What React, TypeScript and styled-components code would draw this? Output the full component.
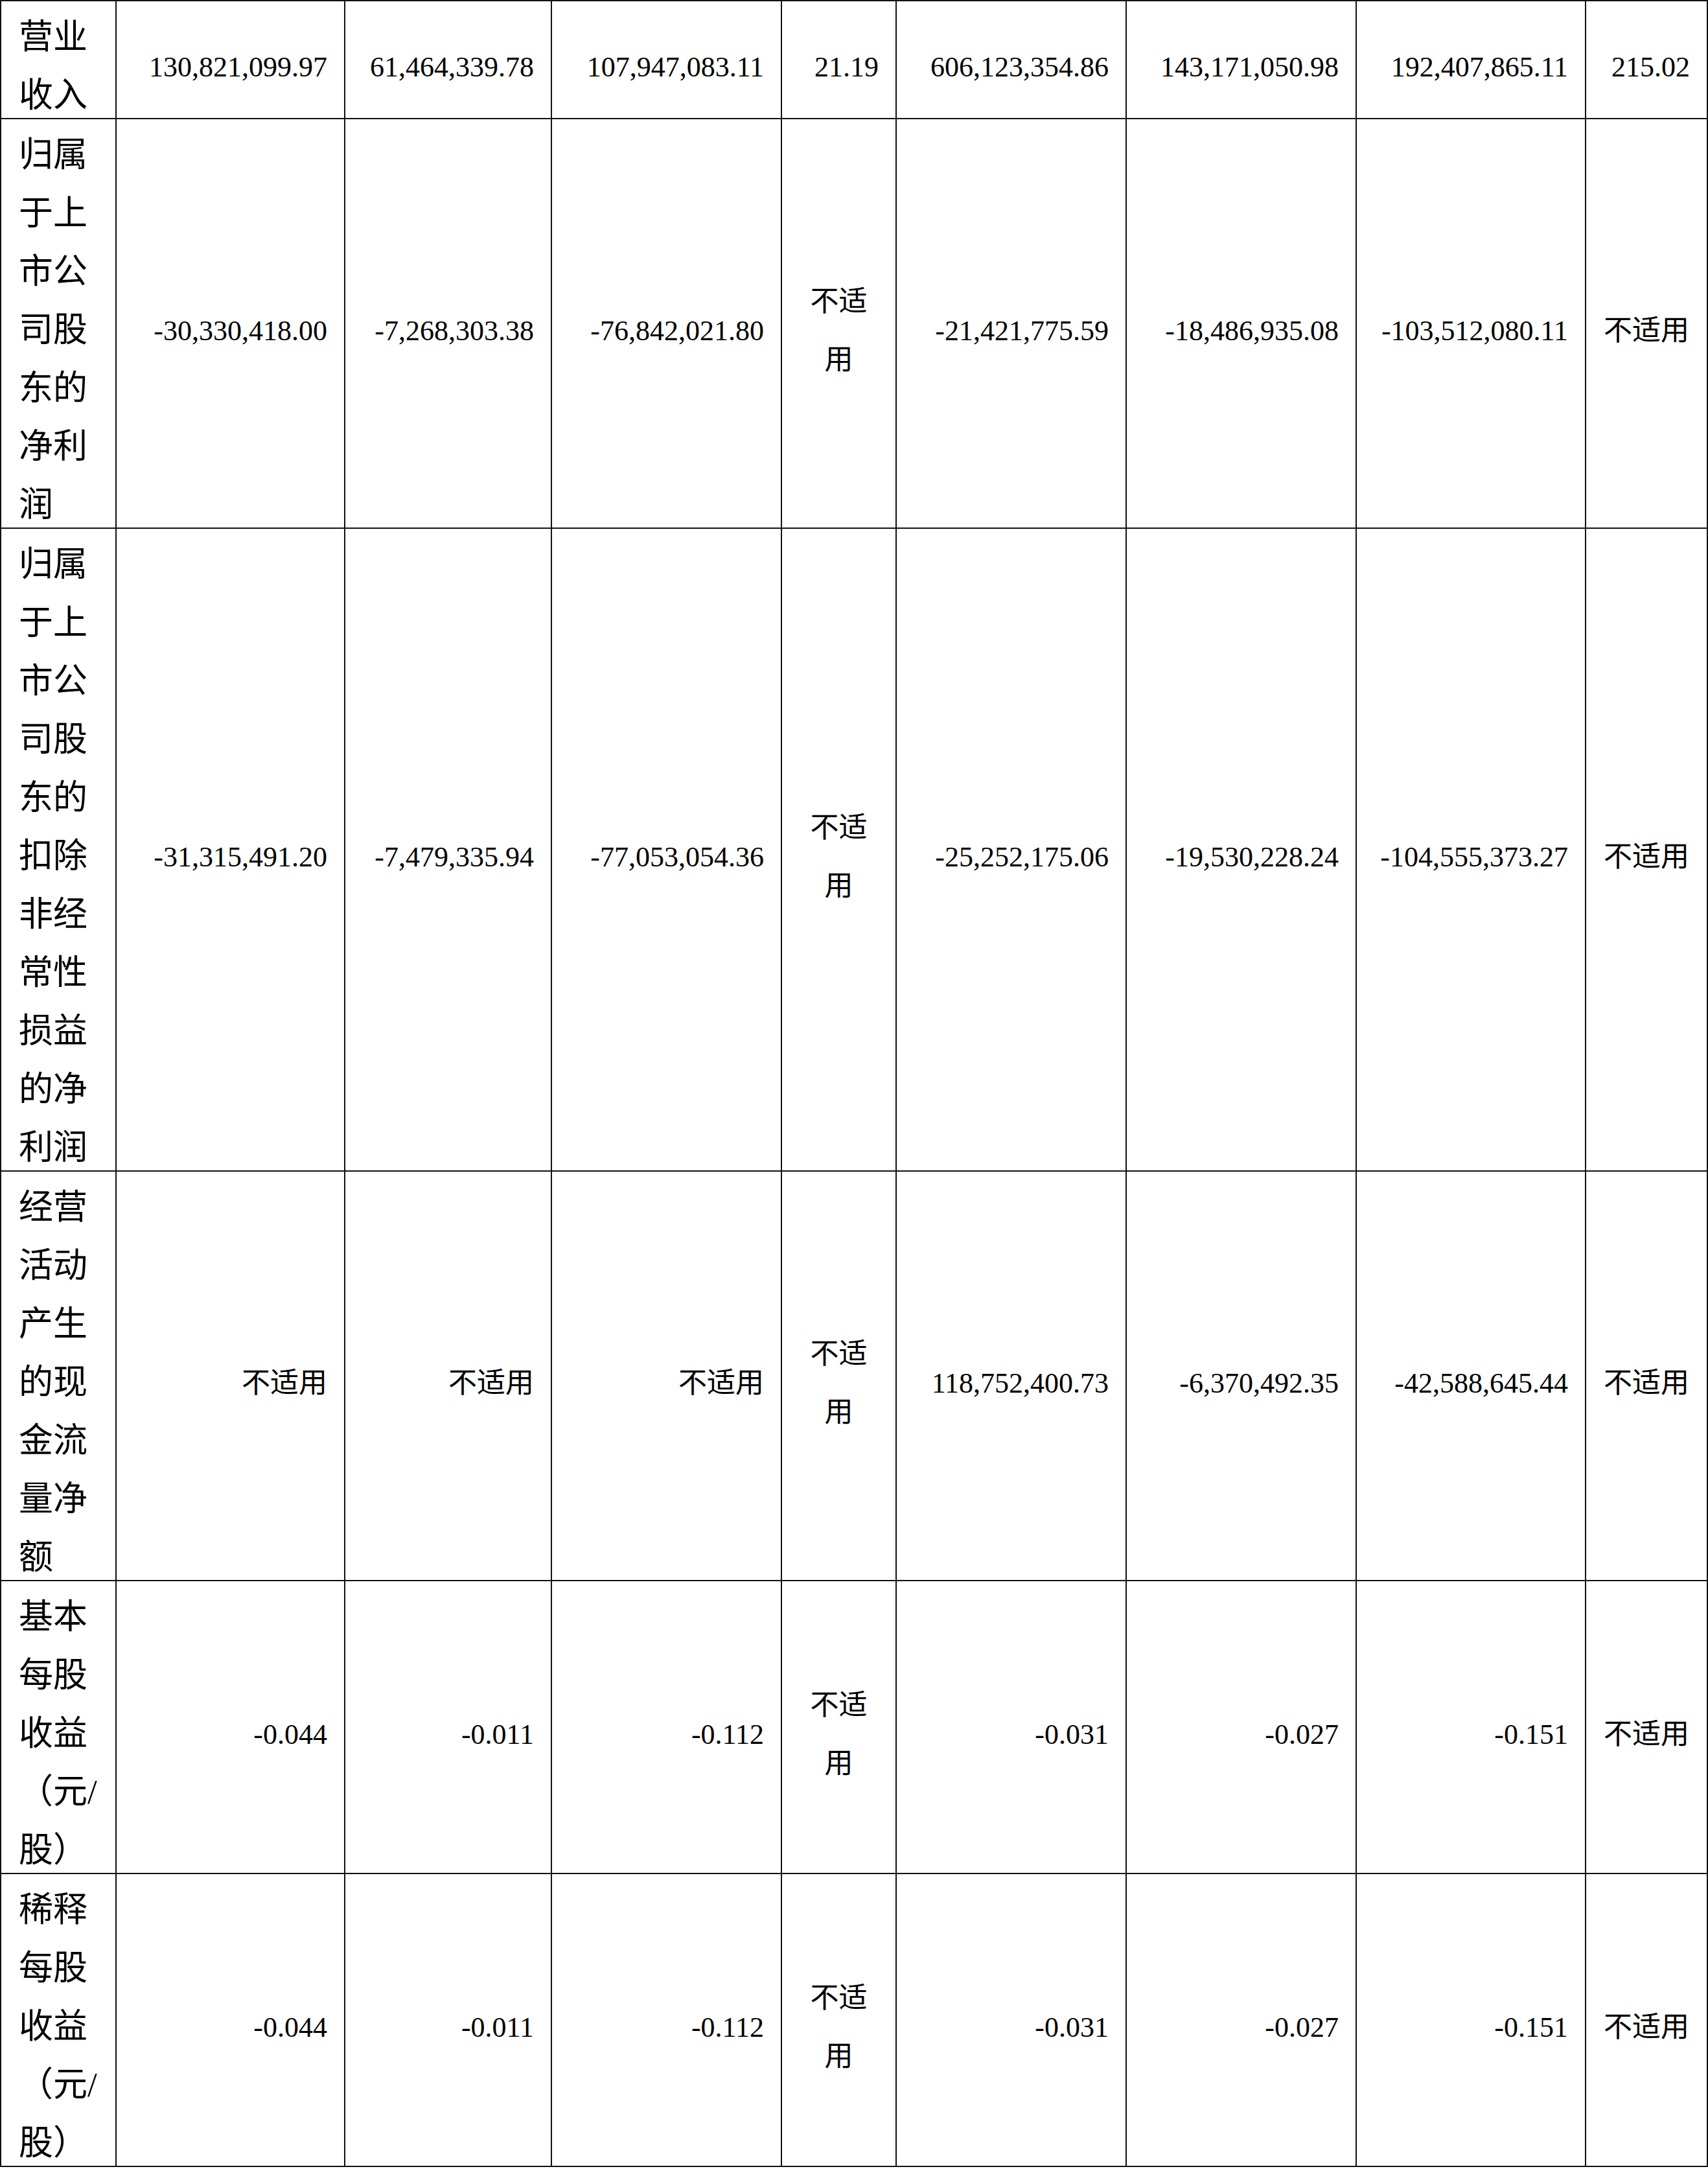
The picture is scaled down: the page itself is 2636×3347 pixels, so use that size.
import styled, { createGlobalStyle } from 'styled-components';

const GlobalStyle = createGlobalStyle`
  html, body {
    margin: 0;
    padding: 0;
    background: #fff;
  }
  body {
    font-family: "Liberation Serif", "Noto Sans CJK SC", serif;
    color: #000;
  }
`;

const NA = '不适用';

interface RowData {
  label: string[];
  values: string[];
}

const eps = ['-0.044', '-0.011', '-0.112', NA, '-0.031', '-0.027', '-0.151', NA];

const rows: RowData[] = [
  {
    label: ['营业', '收入'],
    values: ['130,821,099.97', '61,464,339.78', '107,947,083.11', '21.19', '606,123,354.86', '143,171,050.98', '192,407,865.11', '215.02'],
  },
  {
    label: ['归属', '于上', '市公', '司股', '东的', '净利', '润'],
    values: ['-30,330,418.00', '-7,268,303.38', '-76,842,021.80', NA, '-21,421,775.59', '-18,486,935.08', '-103,512,080.11', NA],
  },
  {
    label: ['归属', '于上', '市公', '司股', '东的', '扣除', '非经', '常性', '损益', '的净', '利润'],
    values: ['-31,315,491.20', '-7,479,335.94', '-77,053,054.36', NA, '-25,252,175.06', '-19,530,228.24', '-104,555,373.27', NA],
  },
  {
    label: ['经营', '活动', '产生', '的现', '金流', '量净', '额'],
    values: [NA, NA, NA, NA, '118,752,400.73', '-6,370,492.35', '-42,588,645.44', NA],
  },
  { label: ['基本', '每股', '收益', '（元/', '股）'], values: eps },
  { label: ['稀释', '每股', '收益', '（元/', '股）'], values: eps },
];

// widths of the nine columns, right border included
const widths = [178, 353, 319, 355, 177, 355, 355, 354, 188];
// the two narrow columns (change ratio) center their "不适用"
const narrowCols = [3, 7];

const Table = styled.table`
  border-collapse: separate;
  border-spacing: 0;
  table-layout: fixed;
  width: 2636px;
  border-top: 2px solid #111;
  border-left: 2px solid #111;
`;

const Col = styled.col<{ $w: number }>`
  width: ${(p) => p.$w}px;
`;

const LabelCell = styled.td`
  border-right: 2px solid #111;
  border-bottom: 2px solid #111;
  padding: 0 0 0 27px;
  vertical-align: top;
  font-size: 53px;
`;

const LabelLine = styled.div`
  height: 90px;
  line-height: 110px;
  white-space: nowrap;
`;

const ValueCell = styled.td<{ $align: 'right' | 'center' }>`
  border-right: 2px solid #111;
  border-bottom: 2px solid #111;
  padding: 24px 26px 0 26px;
  vertical-align: middle;
  text-align: ${(p) => p.$align};
  font-size: 44px;
  line-height: 90px;
  white-space: nowrap;
`;

function Value({ text, col }: { text: string; col: number }) {
  const narrow = narrowCols.includes(col);
  if (text === NA && col === 3) {
    return (
      <ValueCell $align="center">
        不适<br />用
      </ValueCell>
    );
  }
  return <ValueCell $align={text === NA && narrow ? 'center' : 'right'}>{text}</ValueCell>;
}

export default function App() {
  return (
    <>
      <GlobalStyle />
      <Table>
        <colgroup>
          {widths.map((w, i) => (
            <Col key={i} $w={w} />
          ))}
        </colgroup>
        <tbody>
          {rows.map((row, r) => (
            <tr key={r}>
              <LabelCell>
                {row.label.map((line, i) => (
                  <LabelLine key={i}>{line}</LabelLine>
                ))}
              </LabelCell>
              {row.values.map((v, c) => (
                <Value key={c} text={v} col={c} />
              ))}
            </tr>
          ))}
        </tbody>
      </Table>
    </>
  );
}
